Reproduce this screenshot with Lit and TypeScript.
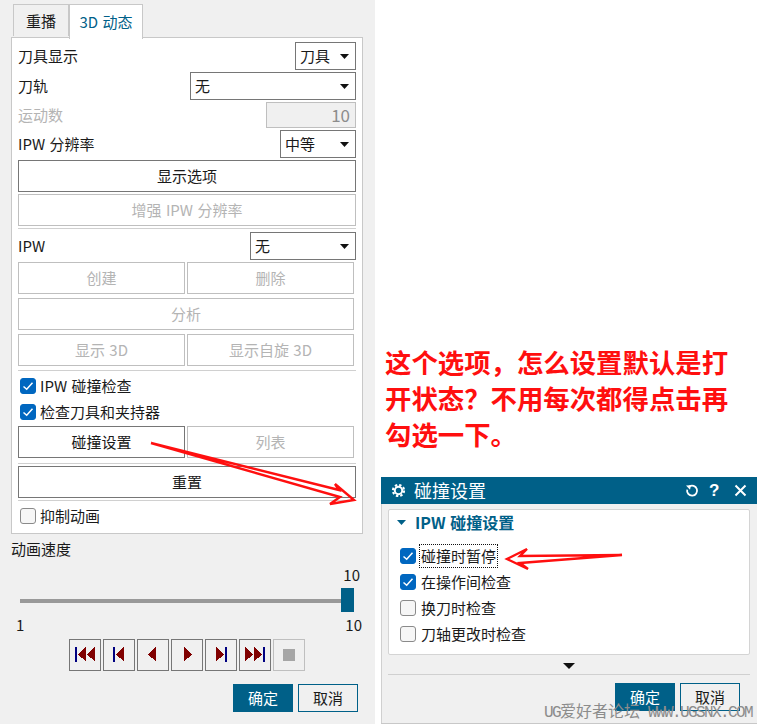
import { LitElement, html, css, svg } from "lit";
import { customElement } from "lit/decorators.js";

const caret = html`<svg class="caret" width="9" height="5" viewBox="0 0 9 5"><path d="M0 0H9L4.500 5Z" fill="#111"/></svg>`;
const check = html`<svg width="12" height="12" viewBox="0 0 12 12"><path d="M1.500 6.500L4.700 9.300L10.500 2.800" fill="none" stroke="#fff" stroke-width="1.500"/></svg>`;

const select = (label: string, cls: string) =>
  html`<div class="select ${cls}"><span>${label}</span>${caret}</div>`;
const cb = (label: string, on: boolean) =>
  html`<div class="cbrow"><span class="cb ${on ? "on" : ""}">${on ? check : ""}</span><span>${label}</span></div>`;

const RED = "#800000";
const BLUE = "#000080";
const left = (x: number) => svg`<path d="M${x} 15.300L${x + 8} 8V22.700Z" fill=${RED}/>`;
const right = (x: number) => svg`<path d="M${x} 8L${x + 8} 15.300L${x} 22.700Z" fill=${RED}/>`;
const bar = (x: number) => svg`<rect x=${x} y="8" width="2" height="15" fill=${BLUE}/>`;
const players = [
  svg`${bar(6)}${left(9)}${left(18)}`,
  svg`${bar(10)}${left(13)}`,
  svg`${left(11)}`,
  svg`${right(13)}`,
  svg`${right(11)}${bar(20)}`,
  svg`${right(6)}${right(15)}${bar(24)}`,
  svg`<rect x="10" y="10" width="12" height="12" fill="#a6a6a6"/>`,
];

@customElement("app-root")
export class AppRoot extends LitElement {
  static styles = css`
    :host {
      display: block;
      width: 757px;
      height: 724px;
      position: relative;
      overflow: hidden;
      background: #fff;
      font-family: "Noto Sans CJK SC", sans-serif;
      font-size: 15px;
      word-spacing: 1px;
      color: #1a1a1a;
    }
    .page { display: flex; height: 724px; }
    .left { width: 375px; background: #f0f0f0; display: flex; flex-direction: column; box-sizing: border-box; padding-top: 4px; }
    .tabs { display: flex; align-items: flex-end; margin-left: 13px; height: 33px; position: relative; z-index: 1; }
    .tab { box-sizing: border-box; display: flex; align-items: center; justify-content: center; border: 1px solid #c8c8c8; border-bottom: none; line-height: 20px; }
    .tab.off { width: 56px; height: 32px; margin-bottom: 1px; background: #f0f0f0; }
    .tab.active { width: 74px; height: 35px; margin-bottom: -2px; background: #fff; color: #006088; }
    .box { box-sizing: border-box; width: 352px; height: 497px; margin-left: 11px; background: #fff; border: 1px solid #c8c8c8; padding: 4px 6px 0; display: flex; flex-direction: column; gap: 2px; }
    .row { display: flex; align-items: center; justify-content: space-between; line-height: 20px; }
    .select { box-sizing: border-box; height: 28px; border: 1px solid #767676; display: flex; align-items: center; justify-content: space-between; padding: 0 6px 0 4px; background: #fff; }
    .w61 { width: 61px; } .w166 { width: 166px; } .w76 { width: 76px; } .w106 { width: 106px; }
    .caret { flex: none; }
    .muted { color: #b4b4b4; }
    .num { box-sizing: border-box; width: 90px; height: 26px; border: 1px solid #bfbfbf; background: #f0f0f0; color: #8c8c8c; font-size: 17px; line-height: 24px; text-align: right; padding-right: 5px; }
    .btn { box-sizing: border-box; height: 32px; border: 1px solid #767676; background: #fff; display: flex; align-items: center; justify-content: center; line-height: 20px; }
    .btn.off { border-color: #bfbfbf; color: #b4b4b4; }
    .full { width: 338px; }
    .w336 { width: 336px; }
    .pair { display: flex; gap: 2px; }
    .pair .btn { width: 167px; }
    .sep { height: 1px; width: 338px; background: #d0d0d0; flex: none; }
    .sep.a { margin-bottom: 1px; }
    .mt2 { margin-top: 2px; }
    .mt3 { margin-top: 3px; }
    .mt1 { margin-top: 1px; }
    .cbrow { display: flex; align-items: center; height: 24px; gap: 4px; padding-left: 2px; line-height: 20px; white-space: nowrap; }
    .cb { box-sizing: border-box; width: 16px; height: 16px; border-radius: 3px; border: 1px solid #8a8a8a; background: #f6f6f6; display: flex; align-items: center; justify-content: center; flex: none; }
    .cb.on { background: #0067c0; border-color: #0067c0; }
    .speed { margin: 5px 0 0 11px; line-height: 20px; }
    .val { width: 349px; margin-left: 11px; margin-top: 6px; text-align: right; line-height: 20px; }
    .slider { position: relative; margin: 3px 0 0 20px; width: 334px; height: 24px; display: flex; align-items: center; }
    .track { width: 322px; height: 4px; margin-top: 2px; background: #999; }
    .thumb { position: absolute; right: 0; top: 0; width: 13px; height: 24px; background: #006088; }
    .ends { display: flex; justify-content: space-between; width: 346px; margin: 3px 0 0 16px; line-height: 20px; }
    .players { display: flex; gap: 2px; margin: 4px 0 0 69px; }
    .pbtn { box-sizing: border-box; width: 32px; height: 32px; border: 1px solid #767676; }
    .pbtn.off { border-color: #bfbfbf; }
    .pbtn svg { display: block; }
    .actions { display: flex; gap: 5px; margin: 13px 0 0 233px; }
    .ok, .cancel { box-sizing: border-box; width: 60px; height: 28px; display: flex; align-items: center; justify-content: center; line-height: 20px; border: 1px solid #006088; }
    .ok { background: #006088; color: #fff; }
    .right { flex: 1; display: flex; flex-direction: column; padding-top: 344px; box-sizing: border-box; }
    .note { margin-left: 10px; font-size: 26.4px; font-weight: 700; line-height: 36px; color: #ff0f0f; white-space: nowrap; }
    .dialog { box-sizing: border-box; margin: 25px 0 0 6px; width: 376px; height: 247px; background: #f0f0f0; box-shadow: inset 1px 0 0 #d0d0d0; border-bottom: 1px solid #c8c8c8; display: flex; flex-direction: column; }
    .title { height: 27px; background: #006088; color: #fff; display: flex; align-items: center; padding: 0 10px; font-size: 18px; line-height: 22px; flex: none; }
    .title .name { margin-left: 8px; flex: 1; position: relative; bottom: 1px; }
    .title .q { font-weight: 700; font-size: 17px; line-height: 20px; width: 10px; text-align: center; margin: 0 15px 0 10px; font-family: "Liberation Sans", sans-serif; }
    .panel { box-sizing: border-box; margin: 5px 0 0 7px; width: 362px; height: 146px; background: #fff; border: 1px solid #d4d4d4; border-radius: 2px; padding: 0 0 0 11px; }
    .head { display: flex; align-items: center; height: 26px; margin: -1px 0 8px -3px; color: #006088; font-size: 16px; font-weight: 700; gap: 9px; line-height: 20px; }
    .opt { display: flex; align-items: center; height: 26px; gap: 5px; line-height: 20px; white-space: nowrap; }
    .focus { outline: 1px dotted #111; padding: 1px 1px; margin: -2px 0 -2px -1px; line-height: 20px; }
    .more { display: flex; justify-content: center; height: 19px; box-sizing: border-box; padding: 3px 1px 0 0; align-items: center; flex: none; }
    .dsep { height: 1px; width: 362px; margin-left: 7px; background: #d0d0d0; flex: none; }
    .dact { display: flex; gap: 5px; margin: 8px 0 0 234px; }
    .arrows { position: absolute; left: 0; top: 0; pointer-events: none; }
    .wm { position: absolute; left: 544px; top: 703px; font-size: 16px; line-height: 20px; color: #8c8c8c; white-space: pre; word-spacing: 0; font-family: "Liberation Mono", "Noto Sans CJK SC", monospace; font-weight: 400; }
    .wm .l { letter-spacing: -1.6px; }
  `;

  render() {
    return html`
      <div class="page">
        <div class="left">
          <div class="tabs">
            <div class="tab off">重播</div>
            <div class="tab active">3D 动态</div>
          </div>
          <div class="box">
            <div class="row"><span>刀具显示</span>${select("刀具", "w61")}</div>
            <div class="row"><span>刀轨</span>${select("无", "w166")}</div>
            <div class="row"><span class="muted">运动数</span><div class="num">10</div></div>
            <div class="row"><span>IPW 分辨率</span>${select("中等", "w76")}</div>
            <div class="btn full">显示选项</div>
            <div class="btn off full">增强 IPW 分辨率</div>
            <div class="sep a"></div>
            <div class="row"><span>IPW</span>${select("无", "w106")}</div>
            <div class="pair"><div class="btn off">创建</div><div class="btn off">删除</div></div>
            <div class="btn off w336 mt2">分析</div>
            <div class="pair mt2"><div class="btn off">显示 3D</div><div class="btn off">显示自旋 3D</div></div>
            <div class="sep mt2"></div>
            <div class="mt1">${cb("IPW 碰撞检查", true)}</div>
            ${cb("检查刀具和夹持器", true)}
            <div class="pair"><div class="btn">碰撞设置</div><div class="btn off">列表</div></div>
            <div class="sep mt3"></div>
            <div class="btn full">重置</div>
            <div class="sep"></div>
            <div class="mt1">${cb("抑制动画", false)}</div>
          </div>
          <div class="speed">动画速度</div>
          <div class="val">10</div>
          <div class="slider"><div class="track"></div><div class="thumb"></div></div>
          <div class="ends"><span>1</span><span>10</span></div>
          <div class="players">
            ${players.map(
              (p, i) => html`<div class="pbtn ${i === 6 ? "off" : ""}"><svg width="30" height="30" viewBox="1 1 30 30" shape-rendering="crispEdges">${p}</svg></div>`
            )}
          </div>
          <div class="actions"><div class="ok">确定</div><div class="cancel">取消</div></div>
        </div>
        <div class="right">
          <div class="note">这个选项，怎么设置默认是打<br />开状态？不用每次都得点击再<br />勾选一下。</div>
          <div class="dialog">
            <div class="title">
              <svg width="15" height="15" viewBox="0 0 15 15">
                <circle cx="7.500" cy="7.500" r="5.600" fill="none" stroke="#fff" stroke-width="2" stroke-dasharray="2.400 2" />
                <circle cx="7.500" cy="7.500" r="3.700" fill="none" stroke="#fff" stroke-width="2" />
              </svg>
              <span class="name">碰撞设置</span>
              <svg width="14" height="14" viewBox="0 0 14 14">
                <path d="M4.200 2.600A5 5 0 1 1 2.200 5.600" fill="none" stroke="#fff" stroke-width="1.800" />
                <path d="M1 1.500L6 1.200L5 5.800Z" fill="#fff" />
              </svg>
              <span class="q">?</span>
              <svg width="13" height="13" viewBox="0 0 13 13">
                <path d="M1.500 1.500L11.500 11.500M11.500 1.500L1.500 11.500" stroke="#fff" stroke-width="2" />
              </svg>
            </div>
            <div class="panel">
              <div class="head">
                <svg width="9" height="5" viewBox="0 0 9 5"><path d="M0 0H9L4.500 5Z" fill="#006088" /></svg>
                <span>IPW 碰撞设置</span>
              </div>
              <div class="opt"><span class="cb on">${check}</span><span class="focus">碰撞时暂停</span></div>
              <div class="opt"><span class="cb on">${check}</span><span>在操作间检查</span></div>
              <div class="opt"><span class="cb"></span><span>换刀时检查</span></div>
              <div class="opt"><span class="cb"></span><span>刀轴更改时检查</span></div>
            </div>
            <div class="more"><svg width="12" height="6" viewBox="0 0 12 6"><path d="M0 0H12L6 6Z" fill="#111" /></svg></div>
            <div class="dsep"></div>
            <div class="dact"><div class="ok">确定</div><div class="cancel">取消</div></div>
          </div>
        </div>
      </div>
      <svg class="arrows" width="757" height="724" viewBox="0 0 757 724">
        <path d="M151 443L339 490L335 484L354 500L330 504L340 497Z" fill="none" stroke="#ff0f0f" stroke-width="2.400" />
        <path d="M622 555L520 556L527 549L507 559L528 569L520 563Z" fill="none" stroke="#ff0f0f" stroke-width="2.400" />
      </svg>
      <div class="wm"><span class="l">UG</span>爱好者论坛<span class="l"> WWW.UGSNX.COM</span></div>
    `;
  }
}
